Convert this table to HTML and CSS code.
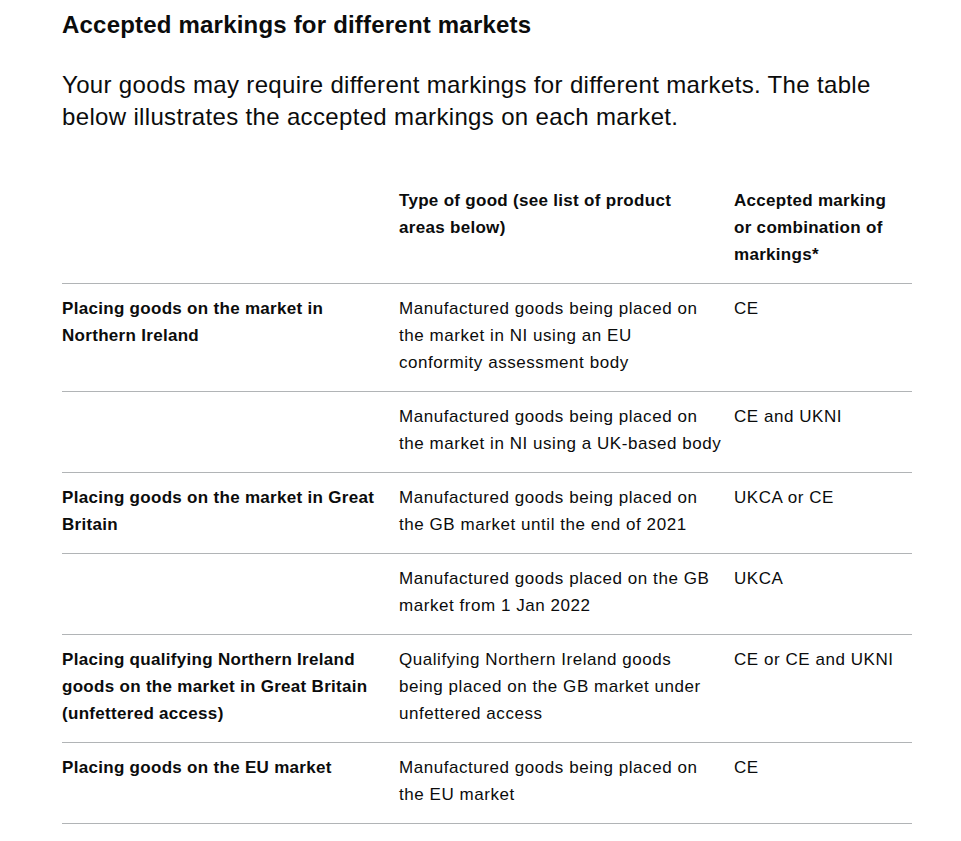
FILE: index.html
```html
<!DOCTYPE html>
<html lang="en">
<head>
<meta charset="utf-8">
<title>Accepted markings for different markets</title>
<link rel="stylesheet" href="styles.css">
</head>
<body>
<main class="content">
  <h2 class="heading">Accepted markings for different markets</h2>
  <p class="lead">Your goods may require different markings for different markets. The table below illustrates the accepted markings on each market.</p>
  <table class="table">
    <thead>
      <tr>
        <th class="col-a"></th>
        <th class="col-b">Type of good (see list of product areas below)</th>
        <th class="col-c">Accepted marking or combination of markings*</th>
      </tr>
    </thead>
    <tbody>
      <tr>
        <th>Placing goods on the market in Northern Ireland</th>
        <td>Manufactured goods being placed on the market in NI using an EU<br>conformity assessment body</td>
        <td>CE</td>
      </tr>
      <tr>
        <th></th>
        <td>Manufactured goods being placed on the market in NI using a UK-based body</td>
        <td>CE and UKNI</td>
      </tr>
      <tr>
        <th>Placing goods on the market in Great Britain</th>
        <td>Manufactured goods being placed on the GB market until the end of 2021</td>
        <td>UKCA or CE</td>
      </tr>
      <tr>
        <th></th>
        <td>Manufactured goods placed on the GB market from 1 Jan 2022</td>
        <td>UKCA</td>
      </tr>
      <tr>
        <th>Placing qualifying Northern Ireland goods on the market in Great Britain (unfettered access)</th>
        <td>Qualifying Northern Ireland goods<br>being placed on the GB market under unfettered access</td>
        <td>CE or CE and UKNI</td>
      </tr>
      <tr>
        <th>Placing goods on the EU market</th>
        <td>Manufactured goods being placed on the EU market</td>
        <td>CE</td>
      </tr>
    </tbody>
  </table>
</main>
</body>
</html>
```
FILE: styles.css
```css
html, body {
  margin: 0;
  padding: 0;
  background: #ffffff;
}
body {
  font-family: "Liberation Sans", Arial, sans-serif;
  color: #0b0c0c;
}
.content {
  width: 850px;
  padding: 10px 0 0 62px;
}
.heading {
  margin: 0;
  font-size: 24px;
  line-height: 30px;
  font-weight: 700;
  letter-spacing: 0.2px;
}
.lead {
  margin: 29px 0 0;
  font-size: 24px;
  line-height: 32px;
  font-weight: 400;
  letter-spacing: 0.34px;
}
.table {
  width: 850px;
  margin-top: 43px;
  border-collapse: collapse;
  border-spacing: 0;
  table-layout: fixed;
  font-size: 17px;
  line-height: 27px;
}
.table th, .table td {
  text-align: left;
  vertical-align: top;
  padding: 11px 16px 15px 0;
  border-bottom: 1px solid #b1b4b6;
}
.table th {
  font-weight: 700;
  letter-spacing: 0.3px;
}
.table td {
  font-weight: 400;
  letter-spacing: 0.55px;
}
.table .col-a { width: 321px; padding-right: 16px; }
.table .col-b { width: 319px; padding-right: 16px; }
.table .col-c { width: 170px; padding-right: 8px; }
.table td:nth-child(2) { padding-right: 10px; }
.table td:last-child { padding-right: 0; }
```
